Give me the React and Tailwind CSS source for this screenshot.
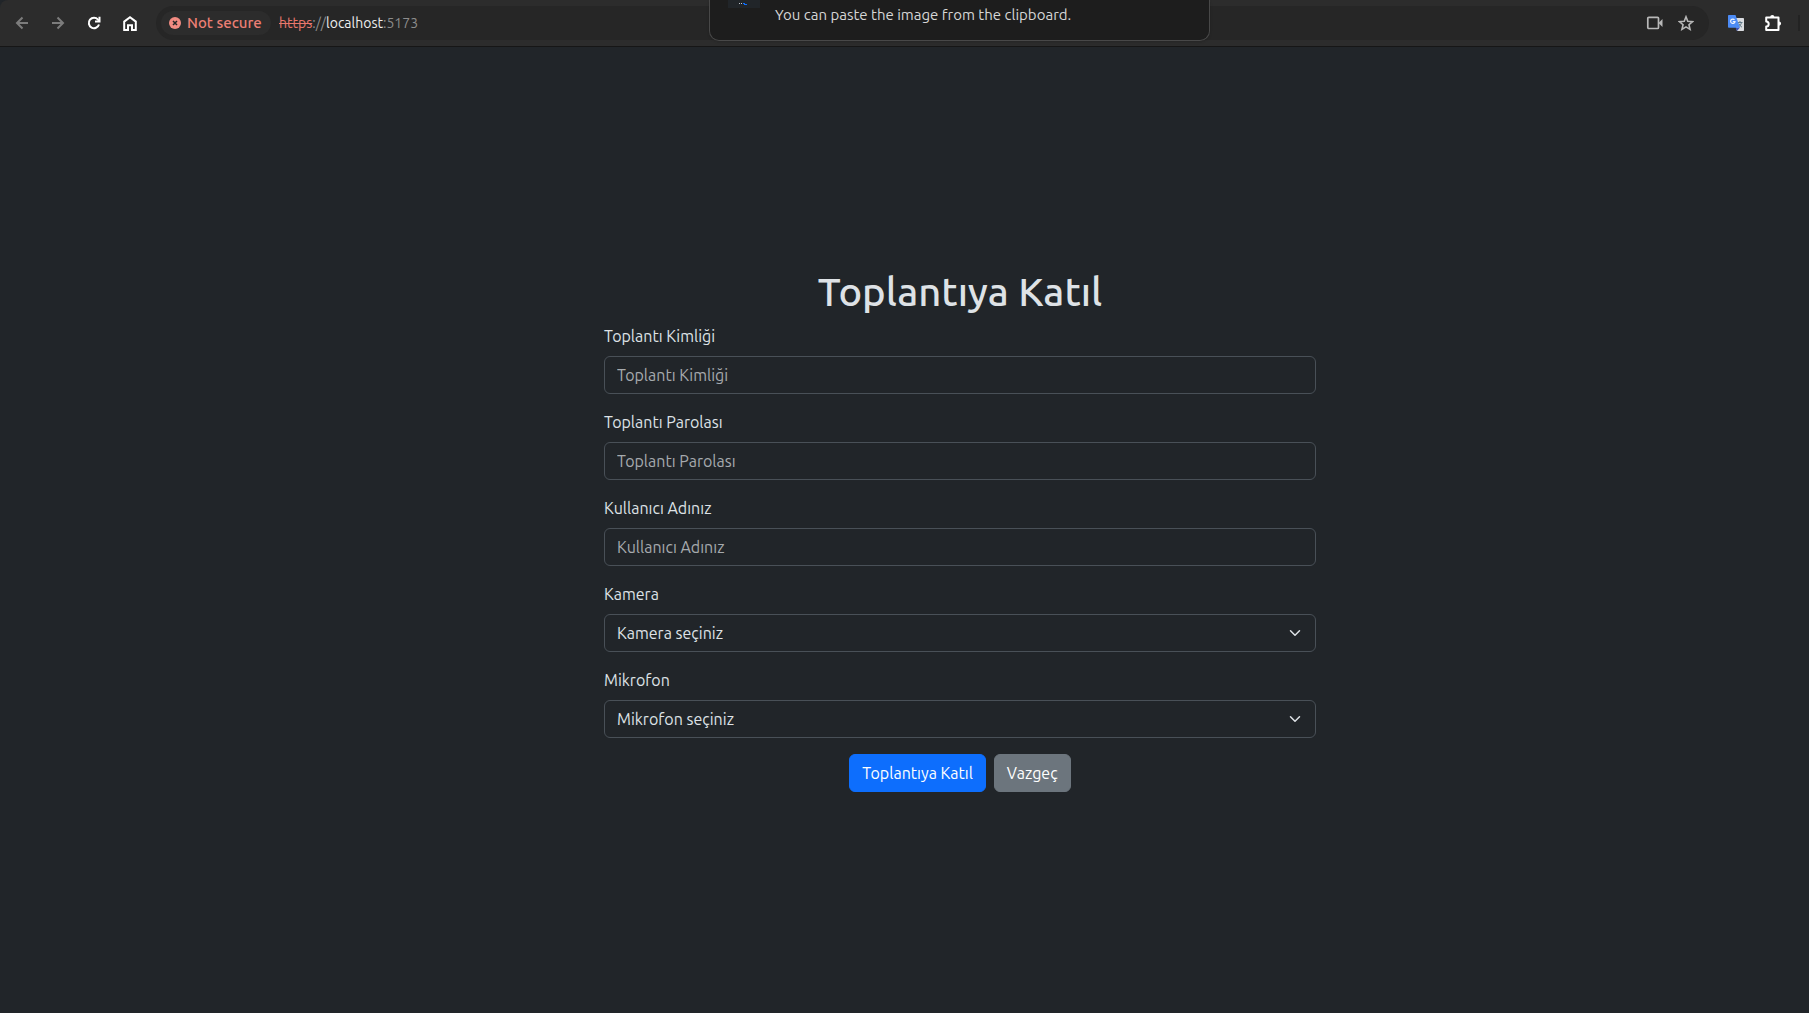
import React from "react";

const textFields = [
  { id: "meeting-id", label: "Toplantı Kimliği", type: "text" },
  { id: "meeting-password", label: "Toplantı Parolası", type: "text" },
  { id: "user-name", label: "Kullanıcı Adınız", type: "text" },
];

const deviceFields = [
  { id: "camera", label: "Kamera", placeholder: "Kamera seçiniz" },
  { id: "microphone", label: "Mikrofon", placeholder: "Mikrofon seçiniz" },
];

const stroke = { fill: "none", stroke: "currentColor", strokeWidth: 2 };

function BackIcon() {
  return (
    <svg viewBox="0 0 14 14" className="size-[14px]" {...stroke}>
      <path d="M13 7H2M7.5 1.5 2 7l5.5 5.5" />
    </svg>
  );
}

function ForwardIcon() {
  return (
    <svg viewBox="0 0 14 14" className="size-[14px]" {...stroke}>
      <path d="M1 7h11M6.500 1.500 12 7l-5.500 5.500" />
    </svg>
  );
}

function ReloadIcon() {
  return (
    <svg viewBox="0 0 14 14" className="size-[14px]" {...stroke}>
      <path d="M12 8.500A5.200 5.200 0 1 1 11 3.600L12.300 5" />
      <path d="M12.500 .8v4.700H8" />
    </svg>
  );
}

function HomeIcon() {
  return (
    <svg viewBox="0 0 14 15" className="h-[15px] w-[14px]" {...stroke}>
      <path d="M1.200 5.600 7 1.300l5.800 4.300V14H9V9.200H5V14H1.200z" />
    </svg>
  );
}

function CameraIcon() {
  return (
    <svg viewBox="0 0 18 14" className="h-[14px] w-[18px]">
      <rect x="1.800" y="1.300" width="10.700" height="11.200" rx="1" fill="none" stroke="currentColor" strokeWidth="1.700" />
      <path d="m12.500 7 4-4v8z" fill="currentColor" />
    </svg>
  );
}

function StarIcon() {
  return (
    <svg viewBox="0 0 16 16" className="size-4" fill="none" stroke="currentColor" strokeWidth="1.600">
      <path d="m8 1.800 1.750 4.450 4.850.4-3.650 3.100 1.100 4.600L8 11.850l-4.050 2.500 1.100-4.600-3.650-3.100 4.850-.4z" />
    </svg>
  );
}

function TranslateIcon() {
  return (
    <svg viewBox="0 0 16 16" className="size-4">
      <path d="M6 3h9.200a.8.8 0 0 1 .8.8v11.400a.8.8 0 0 1-.8.8H9z" fill="#dadce0" />
      <path d="M9.500 7.500h5M12 6v1.500M13.500 7.500c-.4 2-1.600 3.500-3 4.500M10.800 8.500c.7 1.700 1.800 2.900 3.200 3.700" fill="none" stroke="#607988" strokeWidth="1" />
      <path d="m7.500 12.500 1.500 3.500 3-3.500z" fill="#3c50b4" />
      <path d="M.8 0H7.500L12 12.800H.8A.8.8 0 0 1 0 12V.8A.8.8 0 0 1 .8 0z" fill="#4c8bf5" />
      <path d="M6.500 4.800A2.200 2.200 0 1 0 7 6.600H4.800" fill="none" stroke="#eef3fd" strokeWidth="1.200" />
    </svg>
  );
}

function PuzzleIcon() {
  return (
    <svg viewBox="0 0 18 18" className="size-[18px]">
      <path d="M2.200 3.500h12.300v12.500H2.200v-3.600a2.500 2.500 0 0 0 0-5z" fill="none" stroke="currentColor" strokeWidth="2" strokeLinejoin="round" />
      <path d="M6.200 3a2.100 2.100 0 0 1 4.200 0zM15 7.500a2.100 2.100 0 0 1 0 4.200z" fill="currentColor" />
    </svg>
  );
}

function ChevronIcon() {
  return (
    <svg viewBox="0 0 16 16" className="pointer-events-none absolute top-[13px] right-[13px] h-3 w-4" fill="none" stroke="#dee2e6" strokeWidth="2" strokeLinecap="round" strokeLinejoin="round">
      <path d="m2 5 6 6 6-6" />
    </svg>
  );
}

function BrowserBar() {
  return (
    <header className="flex h-[47px] shrink-0 items-center rounded-tl-lg border-b border-[#161616] bg-[#2c2c2c] pl-[15px]">
      <nav className="flex items-center gap-[22px] text-white">
        <button aria-label="Geri" className="text-[#7c7c7c]"><BackIcon /></button>
        <button aria-label="İleri" className="text-[#7c7c7c]"><ForwardIcon /></button>
        <button aria-label="Yenile"><ReloadIcon /></button>
        <button aria-label="Ana sayfa"><HomeIcon /></button>
      </nav>
      <div className="ml-[19px] flex h-[34px] grow items-center rounded-full bg-[#262626] px-[5px]">
        <button className="flex h-6 w-[110px] items-center gap-1.5 rounded-full bg-[#2c2c2c] pl-2 text-[15px] font-medium whitespace-nowrap text-[#ec7f74]">
          <svg viewBox="0 0 12 12" className="size-3 shrink-0">
            <circle cx="6" cy="6" r="6" fill="#f28b82" />
            <path d="m4 4 4 4m0-4-4 4" stroke="#262626" strokeWidth="1.500" />
          </svg>
          Not secure
        </button>
        <p className="ml-2 text-[14px] text-[#8c8c8c]">
          <span className="text-[#e8776c] line-through">https</span>://
          <span className="text-[#eeeeee]">localhost</span>:5173
        </p>
        <div className="mr-2.5 ml-auto flex items-center gap-3.5 text-[#b8b8b8]">
          <button aria-label="Kamera izni"><CameraIcon /></button>
          <button aria-label="Yer imi"><StarIcon /></button>
        </div>
      </div>
      <div className="flex items-center pr-[9px] pl-[19px]">
        <button aria-label="Çeviri"><TranslateIcon /></button>
        <button aria-label="Uzantılar" className="ml-5 text-white"><PuzzleIcon /></button>
        <span className="ml-4 h-4 w-0.5 bg-[#232323]" />
      </div>
    </header>
  );
}

function ClipboardNotice() {
  return (
    <div role="status" className="absolute top-0 left-[709px] flex h-[41px] w-[501px] items-start rounded-b-[10px] border border-t-0 border-[#484848] bg-[#1d1d1d] pl-[18px] shadow-sm">
      <svg viewBox="0 0 32 8" className="h-2 w-8">
        <path d="M0 0h32v8H0z" fill="#212529" />
        <path d="M11 3h1v1h-1zM13 3h1v1h-1z" fill="#bfc4c9" />
        <path d="M15 3h2v1h2v1h-3V4h-1z" fill="#0d6efd" />
      </svg>
      <p className="ml-[15px] pt-1 text-[15px] leading-[22px] text-[#d6d6d6]">You can paste the image from the clipboard.</p>
    </div>
  );
}

export default function App() {
  return (
    <div className="relative flex min-h-screen flex-col bg-[#212529] font-['Ubuntu','Noto_Sans',sans-serif] text-base text-[#dee2e6]">
      <BrowserBar />
      <ClipboardNotice />
      <main className="flex grow flex-col items-center justify-center pl-[111px]">
        <form className="w-full max-w-[712px]">
          <h1 className="mb-2 text-center text-[40px] leading-[48px] font-medium">Toplantıya Katıl</h1>
          {textFields.map(({ id, label, type }) => (
            <div key={id} className="mb-4">
              <label htmlFor={id} className="mb-2 block">{label}</label>
              <input id={id} type={type} placeholder={label} className="block h-[38px] w-full rounded-md border border-[#495057] bg-[#212529] px-3 placeholder:text-[#a6aaae]" />
            </div>
          ))}
          {deviceFields.map(({ id, label, placeholder }) => (
            <div key={id} className="mb-4">
              <label htmlFor={id} className="mb-2 block">{label}</label>
              <div className="relative">
                <select id={id} className="block h-[38px] w-full appearance-none rounded-md border border-[#495057] bg-[#212529] px-3">
                  <option>{placeholder}</option>
                </select>
                <ChevronIcon />
              </div>
            </div>
          ))}
          <div className="flex justify-center gap-2 text-white">
            <button type="submit" className="h-[38px] rounded-md border border-[#0d6efd] bg-[#0d6efd] px-3">Toplantıya Katıl</button>
            <button type="button" className="h-[38px] rounded-md border border-[#6c757d] bg-[#6c757d] px-3">Vazgeç</button>
          </div>
        </form>
      </main>
    </div>
  );
}
